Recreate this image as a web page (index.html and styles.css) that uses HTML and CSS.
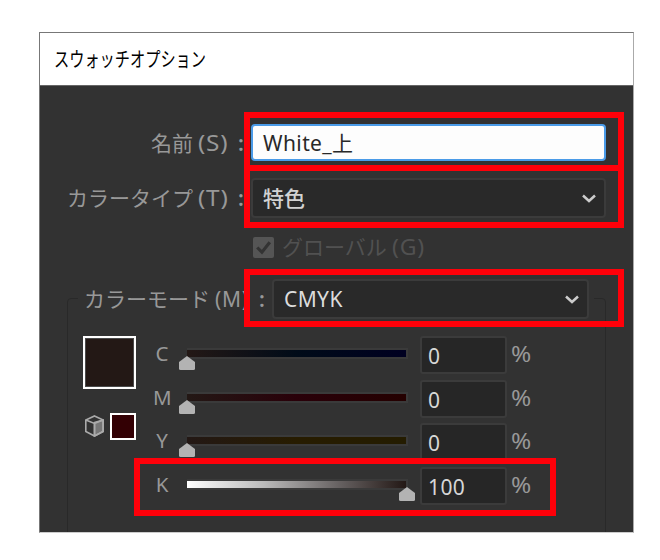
FILE: index.html
```html
<!DOCTYPE html>
<html lang="ja">
<head>
<meta charset="utf-8">
<title>スウォッチオプション</title>
<link rel="stylesheet" href="styles.css">
</head>
<body>
<main class="dialog">
  <header class="titlebar"><h1 class="title">スウォッチオプション</h1></header>
  <div class="content">
    <div class="field">
      <label class="label" for="name">名前<span class="key">(S)</span><span class="colon">:</span></label>
      <div class="control name" id="name">White_上</div>
    </div>
    <div class="field type-row">
      <span class="label">カラータイプ<span class="key">(T)</span><span class="colon">:</span></span>
      <div class="control select"><b class="strong">特色</b><svg class="chevron" viewBox="0 0 14 9"><path d="M1 1.5L7 7L13 1.5"/></svg></div>
    </div>
    <div class="global">
      <span class="check"><svg viewBox="0 0 20 20"><path d="M4 10L8.5 14.5L16 5"/></svg></span>
      <span>グローバル<span class="key">(G)</span></span>
    </div>
    <section class="group">
      <div class="legend">
        <span class="mode-label">カラーモード<span class="key">(M)</span></span>
        <span class="mode-colon">:</span>
        <div class="control select mode"><span class="cmyk">CMYK</span><svg class="chevron" viewBox="0 0 14 9"><path d="M1 1.5L7 7L13 1.5"/></svg></div>
      </div>
      <div class="color-area">
        <div class="swatches">
          <div class="swatch"></div>
          <div class="gamut">
            <svg class="cube" viewBox="0 0 20 22"><path class="side" d="M10 7.5L18.5 5V16.5L10 21Z"/><path d="M10 1L18.7 5V16.5L10 21L1.3 16.5V5ZM1.3 5L10 8.5L18.7 5M10 8.5V21"/></svg>
            <div class="nearest"></div>
          </div>
        </div>
        <div class="channels">
          <div class="channel"><span class="letter">C</span><div class="track cyan"><svg class="thumb" viewBox="0 0 16 14"><path d="M8 0L16 6V12.5Q16 14 14.5 14H1.5Q0 14 0 12.5V6Z"/></svg></div><div class="number">0</div><span class="percent">%</span></div>
          <div class="channel"><span class="letter">M</span><div class="track magenta"><svg class="thumb" viewBox="0 0 16 14"><path d="M8 0L16 6V12.5Q16 14 14.5 14H1.5Q0 14 0 12.5V6Z"/></svg></div><div class="number">0</div><span class="percent">%</span></div>
          <div class="channel"><span class="letter">Y</span><div class="track yellow"><svg class="thumb" viewBox="0 0 16 14"><path d="M8 0L16 6V12.5Q16 14 14.5 14H1.5Q0 14 0 12.5V6Z"/></svg></div><div class="number">0</div><span class="percent">%</span></div>
          <div class="channel"><span class="letter">K</span><div class="track black"><svg class="thumb end" viewBox="0 0 16 14"><path d="M8 0L16 6V12.5Q16 14 14.5 14H1.5Q0 14 0 12.5V6Z"/></svg></div><div class="number">100</div><span class="percent">%</span></div>
        </div>
      </div>
    </section>
  </div>
  <div class="mark mark-name"></div>
  <div class="mark mark-type"></div>
  <div class="mark mark-mode"></div>
  <div class="mark mark-black"></div>
</main>
</body>
</html>
```
FILE: styles.css
```css
* { box-sizing: border-box; }
body {
  margin: 0;
  padding: 32px 0 0 39px;
  background: #fff;
  font: 21px/30px "Noto Sans", "Noto Sans CJK JP", sans-serif;
  color: #989898;
}
.dialog {
  position: relative;
  width: 595px;
  height: 501px;
  border: 1px solid #777;
  border-right-color: #aaa;
  border-bottom-color: #ccc;
  background: #323232;
  overflow: hidden;
}
.titlebar {
  height: 53px;
  padding: 11px 14px;
  background: #fff;
  border-bottom: 1px solid #666;
}
.title {
  margin: 0;
  width: 210px;
  font-size: 20px;
  line-height: 32px;
  font-weight: 400;
  color: #000;
  white-space: nowrap;
  transform: scaleX(.76);
  transform-origin: left;
}
.content { padding-top: 38px; }
.field { display: flex; height: 37px; align-items: center; }
.type-row { height: 40px; margin-top: 17px; }
.label {
  display: flex;
  width: 211px;
  flex: none;
  justify-content: flex-end;
  white-space: nowrap;
}
.key { display: inline-block; width: 33px; margin-left: 5px; letter-spacing: .7px; white-space: nowrap; }
.label .key { transform: scaleX(1.16); transform-origin: left; }
.colon { width: 13px; margin-left: 7px; font-weight: 600; }
.control {
  width: 355px;
  height: 100%;
  border: 2px solid #3b3b3b;
  border-radius: 4px;
  background: #292929;
  color: #d2d2d2;
  display: flex;
  align-items: center;
  justify-content: space-between;
  padding: 0 8px 0 10px;
}
.name { background: #fdfdfd; border-color: #4a9be8; color: #292929; justify-content: flex-start; letter-spacing: .4px; }
.strong { font-weight: 500; }
.chevron { width: 14px; height: 9px; fill: none; stroke: #ccc; stroke-width: 2.5; }
.global {
  display: flex;
  align-items: center;
  height: 30px;
  margin: 14px 0 0 213px;
  gap: 8px;
  color: #515151;
}
.global .key { transform: scaleX(1.1); transform-origin: left; }
.check { display: flex; width: 21px; height: 21px; background: #555; border-radius: 2px; }
.check svg { width: 21px; height: 21px; fill: none; stroke: #333; stroke-width: 3; }
.group {
  width: 539px;
  height: 300px;
  margin: 36px 0 0 27px;
  border: 1px solid #292929;
  border-radius: 4px;
}
.legend {
  display: flex;
  align-items: center;
  height: 40px;
  width: 516px;
  margin: -20px 0 0 10px;
  padding-left: 6px;
  background: #323232;
}
.mode-label { width: 171px; white-space: nowrap; }
.mode-colon { width: 17px; padding-left: 4px; font-weight: 600; }
.mode { width: 317px; color: #dcdcdc; }
.cmyk { letter-spacing: .4px; }
.color-area { display: flex; padding: 17px 0 0 15px; }
.swatches { width: 70px; }
.swatch { width: 53px; height: 53px; border: 2px solid #fff; background: #231815; outline: 1px solid #4a4a4a; outline-offset: -3px; }
.gamut { display: flex; align-items: center; margin-top: 24px; }
.cube { width: 21px; height: 22px; margin: -2px 6px 0 1px; fill: none; stroke: #aaa; stroke-width: 1.6; }
.cube .side { fill: #777; }
.nearest { width: 26px; height: 27px; border: 2px solid #fff; background: #330004; margin-left: -1px; }
.channels { display: grid; grid-auto-rows: 38px; row-gap: 5.7px; }
.channel { display: flex; align-items: center; }
.letter { width: 34px; height: 32px; line-height: 29px; padding-right: 16px; text-align: center; font-size: 20.5px; }
.track { position: relative; width: 221px; height: 11px; border: 2px solid #3a3a3a; border-left: 0; margin: -3px 12px 0 0; }
.cyan { background: linear-gradient(90deg, #231815, #000b18 50%, #000021) padding-box; }
.magenta { background: linear-gradient(90deg, #231815, #290009 50%, #240000) padding-box; }
.yellow { background: linear-gradient(90deg, #231815, #271c00 50%, #241c00) padding-box; }
.black { background: linear-gradient(90deg, #fff, #bbb 35%, #656060 70%, #231815) padding-box; }
.thumb { position: absolute; top: 6px; left: -8px; width: 16px; height: 14px; fill: #b3b3b3; }
.thumb.end { left: 212px; }
.number { width: 87px; height: 38px; border: 2px solid #3b3b3b; border-radius: 3px; background: #262626; color: #d7d7d7; padding: 3px 6px; letter-spacing: .4px; }
.percent { margin: -2px 0 0 4px; width: 24px; transform: scaleX(1.16); transform-origin: left; }
.mark { position: absolute; border: 6px solid #ff0009; pointer-events: none; }
.mark-name { left: 204px; top: 79px; width: 380px; height: 59px; }
.mark-type { left: 204px; top: 132px; width: 380px; height: 63px; }
.mark-mode { left: 204px; top: 236px; width: 380px; height: 58px; }
.mark-black { left: 94px; top: 425px; width: 422px; height: 58px; }
```
